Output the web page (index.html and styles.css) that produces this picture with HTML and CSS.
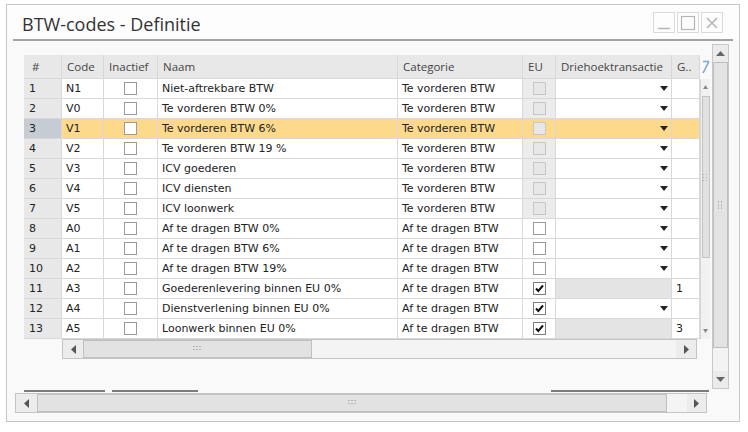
FILE: index.html
```html
<!DOCTYPE html>
<html>
<head>
<meta charset="utf-8">
<link rel="stylesheet" href="styles.css">
</head>
<body>
<div class="window">
  <div class="titlebar">
    <div class="title">BTW-codes - Definitie</div>
    <div class="wbtns">
      <span class="wbtn"><svg width="14" height="14" viewBox="0 0 14 14"><path d="M1 12.5H13" stroke="#b5b5b5" stroke-width="1.5"/></svg></span>
      <span class="wbtn"><svg width="16" height="16" viewBox="0 0 16 16"><rect x="1.5" y="1.5" width="13" height="13" fill="none" stroke="#b5b5b5" stroke-width="1.2"/></svg></span>
      <span class="wbtn"><svg width="14" height="14" viewBox="0 0 14 14"><path d="M2 2L12 12M12 2L2 12" stroke="#b5b5b5" stroke-width="1.6"/></svg></span>
    </div>
  </div>
  <div class="sep"></div>
  <div class="pane">
    <div class="main">
      <div class="grid">
        <div class="gridtop">
          <div class="table">
            <div class="row hdr">
              <div class="c-num">#</div><div>Code</div><div>Inactief</div><div>Naam</div><div>Categorie</div><div>EU</div><div>Driehoektransactie</div><div>G..</div>
            </div>
            <div class="row">
              <div class="num">1</div><div>N1</div><div class="ctr"><span class="cb"></span></div><div>Niet-aftrekbare BTW</div><div>Te vorderen BTW</div><div class="ctr eu-dis"><span class="cb dis"></span></div><div class="dd"><span class="tri"></span></div><div></div>
            </div>
            <div class="row">
              <div class="num">2</div><div>V0</div><div class="ctr"><span class="cb"></span></div><div>Te vorderen BTW 0%</div><div>Te vorderen BTW</div><div class="ctr eu-dis"><span class="cb dis"></span></div><div class="dd"><span class="tri"></span></div><div></div>
            </div>
            <div class="row sel">
              <div class="num">3</div><div>V1</div><div class="ctr"><span class="cb"></span></div><div>Te vorderen BTW 6%</div><div>Te vorderen BTW</div><div class="ctr"><span class="cb dis"></span></div><div class="dd"><span class="tri"></span></div><div></div>
            </div>
            <div class="row">
              <div class="num">4</div><div>V2</div><div class="ctr"><span class="cb"></span></div><div>Te vorderen BTW 19 %</div><div>Te vorderen BTW</div><div class="ctr eu-dis"><span class="cb dis"></span></div><div class="dd"><span class="tri"></span></div><div></div>
            </div>
            <div class="row">
              <div class="num">5</div><div>V3</div><div class="ctr"><span class="cb"></span></div><div>ICV goederen</div><div>Te vorderen BTW</div><div class="ctr eu-dis"><span class="cb dis"></span></div><div class="dd"><span class="tri"></span></div><div></div>
            </div>
            <div class="row">
              <div class="num">6</div><div>V4</div><div class="ctr"><span class="cb"></span></div><div>ICV diensten</div><div>Te vorderen BTW</div><div class="ctr eu-dis"><span class="cb dis"></span></div><div class="dd"><span class="tri"></span></div><div></div>
            </div>
            <div class="row">
              <div class="num">7</div><div>V5</div><div class="ctr"><span class="cb"></span></div><div>ICV loonwerk</div><div>Te vorderen BTW</div><div class="ctr eu-dis"><span class="cb dis"></span></div><div class="dd"><span class="tri"></span></div><div></div>
            </div>
            <div class="row">
              <div class="num">8</div><div>A0</div><div class="ctr"><span class="cb"></span></div><div>Af te dragen BTW 0%</div><div>Af te dragen BTW</div><div class="ctr"><span class="cb"></span></div><div class="dd"><span class="tri"></span></div><div></div>
            </div>
            <div class="row">
              <div class="num">9</div><div>A1</div><div class="ctr"><span class="cb"></span></div><div>Af te dragen BTW 6%</div><div>Af te dragen BTW</div><div class="ctr"><span class="cb"></span></div><div class="dd"><span class="tri"></span></div><div></div>
            </div>
            <div class="row">
              <div class="num">10</div><div>A2</div><div class="ctr"><span class="cb"></span></div><div>Af te dragen BTW 19%</div><div>Af te dragen BTW</div><div class="ctr"><span class="cb"></span></div><div class="dd"><span class="tri"></span></div><div></div>
            </div>
            <div class="row">
              <div class="num">11</div><div>A3</div><div class="ctr"><span class="cb"></span></div><div>Goederenlevering binnen EU 0%</div><div>Af te dragen BTW</div><div class="ctr"><span class="cb chk"><svg width="11" height="11" viewBox="0 0 11 11"><path d="M2 5.5L4.3 8L9 2.5" fill="none" stroke="#111" stroke-width="2"/></svg></span></div><div class="gray"></div><div>1</div>
            </div>
            <div class="row">
              <div class="num">12</div><div>A4</div><div class="ctr"><span class="cb"></span></div><div>Dienstverlening binnen EU 0%</div><div>Af te dragen BTW</div><div class="ctr"><span class="cb chk"><svg width="11" height="11" viewBox="0 0 11 11"><path d="M2 5.5L4.3 8L9 2.5" fill="none" stroke="#111" stroke-width="2"/></svg></span></div><div class="dd"><span class="tri"></span></div><div></div>
            </div>
            <div class="row">
              <div class="num">13</div><div>A5</div><div class="ctr"><span class="cb"></span></div><div>Loonwerk binnen EU 0%</div><div>Af te dragen BTW</div><div class="ctr"><span class="cb chk"><svg width="11" height="11" viewBox="0 0 11 11"><path d="M2 5.5L4.3 8L9 2.5" fill="none" stroke="#111" stroke-width="2"/></svg></span></div><div class="gray"></div><div>3</div>
            </div>
          </div>
          <div class="iv">
            <div class="iv-head"><svg width="10" height="14" viewBox="0 0 10 14"><path d="M3 1.5H9M9 1.5L3 13" fill="none" stroke="#7aa6de" stroke-width="1.6"/></svg></div>
            <div class="iv-track">
              <div class="iv-btn"><svg width="5" height="4" viewBox="0 0 5 4"><path d="M2.5 0L5 4H0Z" fill="#888"/></svg></div>
              <div class="iv-thumb"><svg width="5" height="7" viewBox="0 0 5 7"><g fill="#b0b0b0"><rect x="0" y="0" width="1" height="1"/><rect x="3" y="0" width="1" height="1"/><rect x="0" y="3" width="1" height="1"/><rect x="3" y="3" width="1" height="1"/><rect x="0" y="6" width="1" height="1"/><rect x="3" y="6" width="1" height="1"/></g></svg></div>
              <div class="iv-fill"></div>
              <div class="iv-btn"><svg width="5" height="4" viewBox="0 0 5 4"><path d="M0 0H5L2.5 4Z" fill="#888"/></svg></div>
            </div>
          </div>
        </div>
        <div class="ih">
          <div class="sb-btn ih-l"><svg width="5" height="9" viewBox="0 0 5 9"><path d="M5 0V9L0 4.5Z" fill="#555"/></svg></div>
          <div class="sb-thumb ih-thumb"><svg width="9" height="6" viewBox="0 0 9 6"><g fill="#b5b5b5"><rect x="0" y="0" width="2" height="1"/><rect x="3" y="0" width="2" height="1"/><rect x="6" y="0" width="2" height="1"/><rect x="0" y="3" width="2" height="1"/><rect x="3" y="3" width="2" height="1"/><rect x="6" y="3" width="2" height="1"/></g></svg></div>
          <div class="sb-fill"></div>
          <div class="sb-btn ih-r"><svg width="5" height="9" viewBox="0 0 5 9"><path d="M0 0V9L5 4.5Z" fill="#555"/></svg></div>
        </div>
      </div>
      <div class="tabs">
        <span class="tl t1"></span><span class="tl t2"></span><span class="tspace"></span><span class="tl t3"></span>
      </div>
    </div>
    <div class="ov">
      <div class="ov-btn"><svg width="9" height="5" viewBox="0 0 9 5"><path d="M4.5 0L9 5H0Z" fill="#666"/></svg></div>
      <div class="ov-thumb"><svg width="6" height="9" viewBox="0 0 6 9"><g fill="#b5b5b5"><rect x="0" y="0" width="1" height="2"/><rect x="3" y="0" width="1" height="2"/><rect x="0" y="3" width="1" height="2"/><rect x="3" y="3" width="1" height="2"/><rect x="0" y="6" width="1" height="2"/><rect x="3" y="6" width="1" height="2"/></g></svg></div>
      <div class="ov-fill"></div>
      <div class="ov-btn"><svg width="9" height="5" viewBox="0 0 9 5"><path d="M0 0H9L4.5 5Z" fill="#666"/></svg></div>
    </div>
  </div>
  <div class="oh">
    <div class="sb-btn oh-l"><svg width="5" height="9" viewBox="0 0 5 9"><path d="M5 0V9L0 4.5Z" fill="#555"/></svg></div>
    <div class="sb-thumb oh-thumb"><svg width="9" height="6" viewBox="0 0 9 6"><g fill="#b5b5b5"><rect x="0" y="0" width="2" height="1"/><rect x="3" y="0" width="2" height="1"/><rect x="6" y="0" width="2" height="1"/><rect x="0" y="3" width="2" height="1"/><rect x="3" y="3" width="2" height="1"/><rect x="6" y="3" width="2" height="1"/></g></svg></div>
    <div class="sb-fill"></div>
    <div class="sb-btn oh-r"><svg width="5" height="9" viewBox="0 0 5 9"><path d="M0 0V9L5 4.5Z" fill="#555"/></svg></div>
  </div>
</div>
</body>
</html>
```
FILE: styles.css
```css
* { box-sizing: border-box; }
html, body { margin: 0; padding: 0; background: #fff; }
body { font-family: "DejaVu Sans", sans-serif; }

.window {
  margin: 4px 0 0 6px;
  width: 734px;
  height: 418px;
  border: 1px solid #c6c6c6;
  background: #f9f9f9;
  display: flex;
  flex-direction: column;
}

.titlebar {
  height: 34px;
  display: flex;
  justify-content: space-between;
  align-items: flex-start;
  background: #fdfdfd;
}
.title {
  font-family: "Open Sans", sans-serif;
  font-size: 18px;
  line-height: 24px;
  color: #333;
  padding: 7px 0 0 15px;
}
.wbtns { display: flex; gap: 2px; margin: 7px 16px 0 0; }
.wbtn {
  width: 22px; height: 21px;
  border: 1px solid #dadada;
  background: #fdfdfd;
  display: flex; align-items: center; justify-content: center;
}

.sep { margin-left: 6px; width: 720px; height: 2px; background: #a2a2a2; flex: none; }

.pane { height: 351px; display: flex; flex: none; }
.main {
  width: 704px;
  padding: 14px 0 0 17px;
  display: flex;
  flex-direction: column;
}
.grid { width: 686px; }
.gridtop { display: flex; }
.table { width: 676px; }

.row {
  display: grid;
  grid-template-columns: 38px 42px 54px 240px 125px 33px 116px 28px;
  height: 20px;
}
.row > div {
  border-right: 1px solid #d8d8d8;
  border-bottom: 1px solid #d8d8d8;
  background: #fff;
  padding-left: 4px;
  font-size: 11px;
  line-height: 19px;
  color: #222;
  white-space: nowrap;
  overflow: hidden;
}
.row.hdr { height: 24px; }
.row.hdr > div {
  background: #e8e8e8;
  font-family: "Open Sans", sans-serif;
  font-size: 11.5px;
  line-height: 23px;
  padding-left: 5px;
  color: #444;
}
.row.hdr > .c-num { padding-left: 8px; }
.row > .num { background: #e8e8e8; padding-left: 5px; }
.row.sel > div { background: #fcd98b; }
.row.sel > .num { background: #c7ccd4; }

.row > .ctr { display: flex; align-items: center; justify-content: center; padding-left: 0; }
.row > .eu-dis { background: #ececec; }
.cb {
  width: 13px; height: 13px;
  border: 1px solid #9a9a9a;
  background: #fff;
  display: flex; align-items: center; justify-content: center;
}
.cb.dis { border-color: #c6c6c6; background: #e7e7e7; }
.cb.chk { border-color: #7d7d7d; }

.row > .dd { display: flex; align-items: center; justify-content: flex-end; padding-right: 3px; }
.tri {
  width: 0; height: 0;
  border-left: 4px solid transparent;
  border-right: 4px solid transparent;
  border-top: 5px solid #222;
}
.row > .gray { background: #e4e4e4; }

.iv { width: 10px; display: flex; flex-direction: column; }
.iv-head { height: 24px; display: flex; align-items: center; justify-content: center; }
.iv-track {
  flex: 1;
  background: #f1f1f1;
  border-left: 1px solid #d6d6d6;
  display: flex; flex-direction: column; align-items: center;
}
.iv-btn { height: 16px; width: 100%; display: flex; align-items: center; justify-content: center; }
.iv-thumb {
  width: 8px; height: 162px;
  margin-top: 1px;
  background: #e1e1e1;
  border: 1px solid #c3c3c3;
  display: flex; align-items: center; justify-content: center;
}
.iv-fill { flex: 1; }

.ih {
  margin-left: 38px;
  width: 635px;
  height: 20px;
  display: flex;
  border: 1px solid #c4c4c4;
  background: #f4f4f4;
}
.sb-btn { display: flex; align-items: center; justify-content: center; background: #ececec; flex: none; }
.sb-thumb {
  flex: none;
  background: #e2e2e2;
  border: 1px solid #c0c0c0;
  display: flex; align-items: center; justify-content: center;
}
.sb-fill { flex: 1; }
.ih-l { width: 20px; }
.ih-thumb { width: 229px; }
.ih-r { width: 20px; }

.tabs { margin-top: auto; display: flex; height: 2px; margin-right: 2px; }
.tl { height: 2px; background: #7c7c7c; }
.t1 { width: 81px; }
.t2 { width: 86px; margin-left: 7px; }
.tspace { flex: 1; }
.t3 { width: 158px; }

.ov {
  margin: 3px 0 0 1px;
  width: 17px;
  height: 345px;
  display: flex;
  flex-direction: column;
  border: 1px solid #c8c8c8;
  background: #f3f3f3;
}
.ov-btn { height: 17px; background: #ebebeb; display: flex; align-items: center; justify-content: center; flex: none; }
.ov-thumb {
  height: 286px;
  background: #e3e3e3;
  border: 1px solid #bebebe;
  display: flex; align-items: center; justify-content: center;
  flex: none;
}
.ov-fill { flex: 1; }

.oh {
  margin: 1px 0 0 8px;
  width: 692px;
  height: 20px;
  display: flex;
  border: 1px solid #c4c4c4;
  background: #f4f4f4;
}
.oh-l { width: 21px; }
.oh-thumb { width: 630px; }
.oh-r { width: 19px; }
```
